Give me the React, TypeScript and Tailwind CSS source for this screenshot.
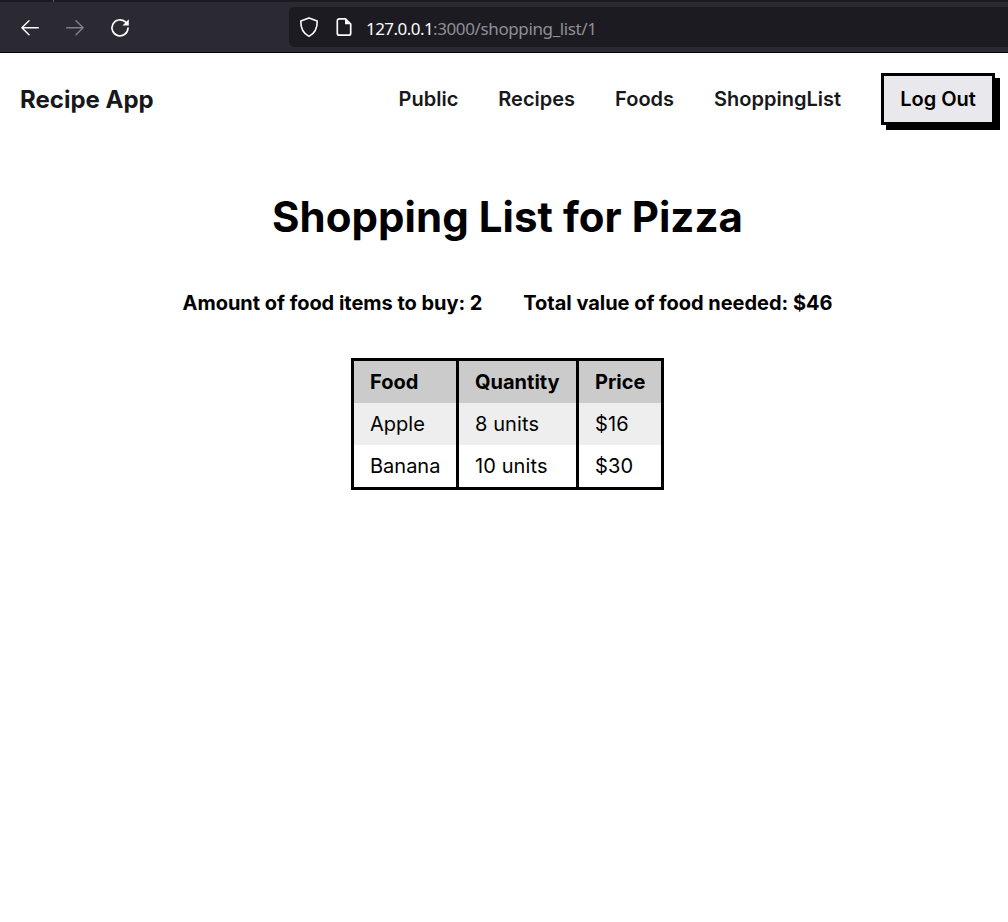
import React from "react";

const rows = [
  { food: "Apple", quantity: "8 units", price: "$16" },
  { food: "Banana", quantity: "10 units", price: "$30" },
];

function BrowserBar() {
  return (
    <div className="flex h-[53px] items-start border-b border-black bg-[#2b2a33]">
      <div className="flex h-[52px] w-full flex-col">
        <div className="h-[2px] shrink-0 bg-[#1c1b22]">
          <div className="ml-[53px] h-[2px] w-px bg-[#5b5a63]" />
        </div>
        <div className="flex pt-[5px]">
          <div className="flex h-10 w-[289px] items-center pt-[2px] pl-5">
            <svg width="20" height="20" viewBox="0 0 20 20" fill="none" stroke="#fbfbfe" strokeWidth="1.5" strokeLinecap="round" strokeLinejoin="round">
              <path d="M18.3 9.7H2M9 2.7 1.9 9.7 9 16.7" />
            </svg>
            <svg className="ml-[25px]" width="20" height="20" viewBox="0 0 20 20" fill="none" stroke="#807f86" strokeWidth="1.5" strokeLinecap="round" strokeLinejoin="round">
              <path d="M1.7 9.7H18M11 2.7l7.1 7-7.1 7" />
            </svg>
            <svg className="ml-[25px]" width="20" height="20" viewBox="0 0 20 20" fill="none">
              <path d="M18 10.2a8 8 0 1 1-2.9-6.5l1 1" stroke="#fbfbfe" strokeWidth="1.7" strokeLinecap="round" />
              <path d="M18.8 1.3v6.3h-6.3z" fill="#fbfbfe" />
            </svg>
          </div>
          <div className="flex h-10 flex-1 items-center rounded-l-[5px] bg-[#1c1b22] pl-[10px]">
            <svg width="20" height="22" viewBox="0 0 20 22" fill="none" stroke="#fbfbfe" strokeWidth="1.6" strokeLinejoin="round">
              <path d="M10 1.9 18.2 5c.2 6.2-1.7 12-8.2 15.400C3.500 17 1.600 11.200 1.800 5z" />
            </svg>
            <svg className="ml-4" width="18" height="20" viewBox="0 0 18 20" fill="none">
              <path d="M10.500 1.800H4.300a2 2 0 0 0-2 2v12.400a2 2 0 0 0 2 2h9.400a2 2 0 0 0 2-2V7z" stroke="#fbfbfe" strokeWidth="1.7" strokeLinejoin="round" />
              <path d="M10 1.500v5.800h6z" fill="#fbfbfe" />
            </svg>
            <div className="ml-[13px] pt-[3px] font-['Noto_Sans',sans-serif] text-[17px] leading-6 whitespace-nowrap text-[#8f8f95]">
              <span className="inline-block w-[67px] tracking-[-0.55px] text-[#fbfbfe]">127.0.0.1</span>
              <span className="tracking-[-0.38px]">:3000/shopping_list/1</span>
            </div>
          </div>
        </div>
      </div>
    </div>
  );
}

export default function App() {
  return (
    <div className="min-h-[922px] w-full bg-white font-['Inter',sans-serif] text-xl text-black">
      <BrowserBar />
      <nav className="flex h-[92px] items-center justify-between pr-[13px] pl-5 text-[#18181b]">
        <a className="pt-px text-2xl font-bold">Recipe App</a>
        <div className="flex items-center gap-10 font-semibold">
          <a>Public</a>
          <a>Recipes</a>
          <a>Foods</a>
          <a>ShoppingList</a>
          <button className="h-[52px] w-[114px] border-3 border-black bg-[#e9e9ed] font-semibold text-black shadow-[5px_5px_0_0_#000]">
            Log Out
          </button>
        </div>
      </nav>
      <main className="flex flex-col items-center pt-[44px] pl-[7px]">
        <h1 className="text-[42px] leading-14 font-bold tracking-[0.04px]">Shopping List for Pizza</h1>
        <div className="mt-[44px] flex gap-[41px] font-bold tracking-[-0.03px]">
          <p>Amount of food items to buy: 2</p>
          <p>Total value of food needed: $46</p>
        </div>
        <table className="mt-[41px] w-[313px] table-fixed border-separate border-spacing-0 border-3 border-black text-left">
          <colgroup>
            <col className="w-[105px]" />
            <col className="w-[120px]" />
            <col className="w-[82px]" />
          </colgroup>
          <thead>
            <tr className="h-[42px] bg-[#cbcbcb]">
              <th className="border-r-3 border-black p-0 pl-4">Food</th>
              <th className="border-r-3 border-black p-0 pl-4">Quantity</th>
              <th className="p-0 pl-4">Price</th>
            </tr>
          </thead>
          <tbody>
            {rows.map((r) => (
              <tr key={r.food} className="h-[42px] odd:bg-[#eeeeee]">
                <td className="border-r-3 border-black p-0 pl-4">{r.food}</td>
                <td className="border-r-3 border-black p-0 pl-4 tracking-[0.1px]">{r.quantity}</td>
                <td className="p-0 pl-4 tracking-[0.1px]">{r.price}</td>
              </tr>
            ))}
          </tbody>
        </table>
      </main>
    </div>
  );
}
